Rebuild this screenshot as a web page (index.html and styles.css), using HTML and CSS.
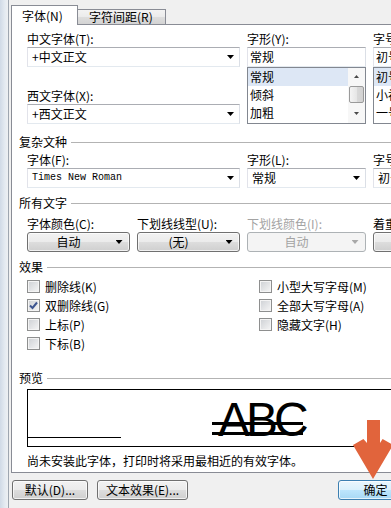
FILE: index.html
```html
<!DOCTYPE html>
<html>
<head>
    <meta charset="UTF-8">
    <title>字体</title>
    <link rel="stylesheet" href="styles.css">
</head>
<body>
    <div class="window">
        <div class="window-edge"></div>
        <div class="dialog">
            <div class="tabs">
                <div class="tab active">字体(N)</div>
                <div class="tab">字符间距(R)</div>
            </div>

            <div class="panel">
                <!-- 字体选择 -->
                <div class="section font-grid">
                    <div class="field">
                        <div class="label">中文字体(T):</div>
                        <div class="combo"><span class="value">+中文正文</span><span class="drop"><i class="arrow"></i></span></div>
                        <div class="label label-second">西文字体(X):</div>
                        <div class="combo"><span class="value">+西文正文</span><span class="drop"><i class="arrow"></i></span></div>
                    </div>
                    <div class="field">
                        <div class="label">字形(Y):</div>
                        <div class="textbox">常规</div>
                        <div class="listbox">
                            <div class="list-items">
                                <div class="list-item selected">常规</div>
                                <div class="list-item">倾斜</div>
                                <div class="list-item">加粗</div>
                            </div>
                            <div class="scrollbar">
                                <div class="scroll-btn"><i class="arrow-up"></i></div>
                                <div class="scroll-thumb"></div>
                                <div class="scroll-btn scroll-btn-down"><i class="arrow-down"></i></div>
                            </div>
                        </div>
                    </div>
                    <div class="field">
                        <div class="label">字号(S):</div>
                        <div class="textbox">初号</div>
                        <div class="listbox">
                            <div class="list-items">
                                <div class="list-item selected">初号</div>
                                <div class="list-item">小初</div>
                                <div class="list-item">一号</div>
                            </div>
                        </div>
                    </div>
                </div>

                <div class="group-title title-complex">复杂文种</div>
                <div class="section font-grid section-complex">
                    <div class="field">
                        <div class="label">字体(F):</div>
                        <div class="combo"><span class="value mono">Times New Roman</span><span class="drop"><i class="arrow"></i></span></div>
                    </div>
                    <div class="field">
                        <div class="label">字形(L):</div>
                        <div class="combo"><span class="value">常规</span><span class="drop"><i class="arrow"></i></span></div>
                    </div>
                    <div class="field">
                        <div class="label">字号(Z):</div>
                        <div class="combo"><span class="value">初号</span><span class="drop"><i class="arrow"></i></span></div>
                    </div>
                </div>

                <div class="group-title">所有文字</div>
                <div class="section text-grid">
                    <div class="field">
                        <div class="label">字体颜色(C):</div>
                        <div class="dropdown"><span class="value">自动</span><span class="drop"><i class="arrow"></i></span></div>
                    </div>
                    <div class="field">
                        <div class="label">下划线线型(U):</div>
                        <div class="dropdown"><span class="value">(无)</span><span class="drop"><i class="arrow"></i></span></div>
                    </div>
                    <div class="field disabled">
                        <div class="label">下划线颜色(I):</div>
                        <div class="dropdown"><span class="value">自动</span><span class="drop"><i class="arrow"></i></span></div>
                    </div>
                    <div class="field">
                        <div class="label">着重号(·):</div>
                        <div class="dropdown"><span class="value">(无)</span><span class="drop"><i class="arrow"></i></span></div>
                    </div>
                </div>

                <div class="group-title">效果</div>
                <div class="section checks">
                    <div class="check-col">
                        <label class="check"><span class="box"></span>删除线(K)</label>
                        <label class="check"><span class="box"><svg width="11" height="11" viewBox="0 0 11 11"><path d="M2 5.5 L4.5 8 L9 2.5" fill="none" stroke="#3d5590" stroke-width="2"/></svg></span>双删除线(G)</label>
                        <label class="check"><span class="box"></span>上标(P)</label>
                        <label class="check"><span class="box"></span>下标(B)</label>
                    </div>
                    <div class="check-col">
                        <label class="check"><span class="box"></span>小型大写字母(M)</label>
                        <label class="check"><span class="box"></span>全部大写字母(A)</label>
                        <label class="check"><span class="box"></span>隐藏文字(H)</label>
                    </div>
                </div>

                <div class="group-title title-preview">预览</div>
                <div class="section">
                    <div class="preview">
                        <div class="baseline"></div>
                        <div class="sample">ABC</div>
                    </div>
                    <div class="note">尚未安装此字体，打印时将采用最相近的有效字体。</div>
                </div>
            </div>

            <div class="actions">
                <div class="btn btn-reset">默认(D)...</div>
                <div class="btn btn-effects">文本效果(E)...</div>
                <div class="btn btn-ok">确定</div>
            </div>
        </div>

        <svg class="pointer" width="45" height="64" viewBox="0 0 45 64">
            <polygon points="17,4 30,4 30,27 32.6,22.9 43,29 23,63 3,29 13.4,22.9 17,27" fill="#e1643c"/>
        </svg>
    </div>
</body>
</html>
```

FILE: styles.css
```css
* {
    margin: 0;
    padding: 0;
    box-sizing: border-box;
}

body {
    width: 391px;
    height: 508px;
    overflow: hidden;
    font-family: "Noto Sans CJK SC", "Liberation Sans", sans-serif;
    font-size: 12px;
    line-height: 14px;
    color: #000;
    background: #f0f0f0;
}

.window {
    position: relative;
    display: flex;
    height: 508px;
}

.window-edge {
    flex: none;
    width: 9px;
    background: linear-gradient(to right, #d0dae6, #e4eaf1 60%, #eef0f2);
    border-right: 1px solid #9ea6b0;
}

.dialog {
    flex: none;
    width: 460px;
    padding: 5px 0 0 2px;
}

/* 标签页 */
.tabs {
    display: flex;
    align-items: flex-end;
    height: 19px;
}

.tab {
    height: 15px;
    width: 88px;
    padding-left: 11px;
    border: 1px solid #898c95;
    border-left: none;
    border-bottom: none;
    background: linear-gradient(#f3f3f3, #ebebeb 50%, #dedede 50%, #d3d3d3);
    white-space: nowrap;
}

.tab.active {
    position: relative;
    z-index: 2;
    width: 67px;
    height: 20px;
    margin-bottom: -1px;
    padding: 3px 0 0 10px;
    border-left: 1px solid #898c95;
    background: #fff;
}

.panel {
    width: 440px;
    height: 449px;
    padding: 7px 0 0 7px;
    border: 1px solid #898c95;
    background: #fff;
}

.section {
    padding-left: 8px;
}

.label {
    height: 14px;
    margin-bottom: 1px;
    white-space: nowrap;
}

.label-second {
    margin-top: 22px;
}

.font-grid {
    display: grid;
    grid-template-columns: 213px 119px 100px;
    column-gap: 7px;
}

.text-grid {
    display: grid;
    grid-template-columns: 103px 103px 119px 100px;
    column-gap: 7px;
    padding-top: 7px;
}

.section-complex {
    padding-top: 4px;
}

/* 输入框与下拉框 */
.combo,
.textbox {
    display: flex;
    align-items: center;
    height: 20px;
    border: 1px solid #abadb3;
    border-color: #abadb3 #dbdfe6 #e3e9ef #e2e3ea;
    background: #fff;
    white-space: nowrap;
    overflow: hidden;
}

.combo .value {
    flex: 1;
    padding-left: 4px;
    line-height: 18px;
}

.textbox {
    padding-left: 2px;
}

.mono {
    font-family: "Liberation Mono", monospace;
    font-size: 10px;
}

.drop {
    flex: none;
    width: 17px;
    display: flex;
    justify-content: center;
}

.arrow,
.arrow-down,
.arrow-up {
    display: block;
    width: 7px;
    height: 4px;
    background: #000;
    clip-path: polygon(0 0, 100% 0, 50% 100%);
}

.arrow-up {
    width: 5px;
    height: 3px;
    background: #4a4a4a;
    clip-path: polygon(50% 0, 100% 100%, 0 100%);
}

.arrow-down {
    width: 5px;
    height: 3px;
    background: #4a4a4a;
}

.listbox {
    display: flex;
    height: 57px;
    border: 1px solid #828790;
    background: #fff;
}

.list-items {
    flex: 1;
    min-width: 0;
}

.list-item {
    height: 18px;
    line-height: 18px;
    padding-left: 2px;
    white-space: nowrap;
}

.list-item.selected {
    background: #dde7f5;
}

.scrollbar {
    flex: none;
    display: flex;
    flex-direction: column;
    width: 17px;
    background: #f7f7f7;
}

.scroll-btn {
    height: 17px;
    display: flex;
    align-items: center;
    justify-content: center;
}

.scroll-btn-down {
    flex: 1;
}

.scroll-thumb {
    height: 17px;
    margin: 1px;
    border: 1px solid #9a9a9a;
    border-radius: 2px;
    background: linear-gradient(to right, #f4f4f4, #e6e6e6 50%, #d9d9d9 50%, #d2d2d2);
}

/* 按钮 */
.dropdown,
.btn {
    display: flex;
    align-items: center;
    height: 20px;
    border: 1px solid #707070;
    border-radius: 3px;
    background: linear-gradient(#f2f2f2, #ebebeb 50%, #dddddd 50%, #cfcfcf);
    box-shadow: inset 0 0 0 1px rgba(255, 255, 255, 0.7);
    white-space: nowrap;
}

.dropdown .value {
    flex: 1;
    text-align: center;
}

.dropdown .drop {
    width: 20px;
}

.disabled .label,
.disabled .dropdown {
    color: #a3a3a3;
}

.disabled .dropdown {
    border-color: #adb2b5;
    background: #f4f4f4;
    box-shadow: none;
}

.disabled .arrow {
    background: #a8a8a8;
}

/* 分组标题 */
.group-title {
    display: flex;
    align-items: center;
    gap: 4px;
    height: 14px;
    margin-top: 8px;
    white-space: nowrap;
}

.group-title::after {
    content: "";
    flex: 1;
    height: 1px;
    background: #b3b3b3;
}

.title-complex {
    margin-top: 11px;
}

.title-preview {
    margin-top: 18px;
}

/* 效果 */
.checks {
    display: grid;
    grid-template-columns: 232px 1fr;
    padding-top: 3px;
}

.check-col {
    display: flex;
    flex-direction: column;
}

.check {
    display: flex;
    align-items: center;
    gap: 5px;
    height: 19px;
    white-space: nowrap;
}

.box {
    flex: none;
    display: flex;
    align-items: center;
    justify-content: center;
    width: 13px;
    height: 13px;
    border: 1px solid #8e8f8f;
    background: linear-gradient(135deg, #cdd0d4, #f6f6f6);
    box-shadow: inset 0 0 0 1px #f4f4f4;
}

/* 预览 */
.preview {
    display: flex;
    align-items: flex-end;
    width: 420px;
    height: 58px;
    margin-top: 4px;
    border: 1px solid #000;
}

.baseline {
    flex: none;
    width: 93px;
    height: 1px;
    margin-bottom: 8px;
    background: #000;
}

.sample {
    position: relative;
    margin: 0 0 2px 97px;
    font-family: "Liberation Sans", sans-serif;
    font-size: 48px;
    line-height: 48px;
    letter-spacing: -4px;
}

.sample::before,
.sample::after {
    content: "";
    position: absolute;
    left: -6px;
    right: 2px;
    height: 3px;
    background: #000;
}

.sample::before {
    top: 26px;
}

.sample::after {
    top: 36px;
}

.note {
    margin-top: 7px;
    white-space: nowrap;
}

/* 底部按钮 */
.actions {
    display: flex;
    margin-top: 7px;
    padding-left: 1px;
}

.btn {
    justify-content: center;
}

.btn-reset {
    width: 76px;
}

.btn-effects {
    width: 91px;
    margin-left: 9px;
}

.btn-ok {
    width: 75px;
    margin-left: 150px;
    border-color: #3c7fb1;
    background: linear-gradient(#eaf6fd, #d9f0fc 50%, #bee6fd 50%, #a7d9f5);
}

.pointer {
    position: absolute;
    left: 350px;
    top: 416px;
}
```
